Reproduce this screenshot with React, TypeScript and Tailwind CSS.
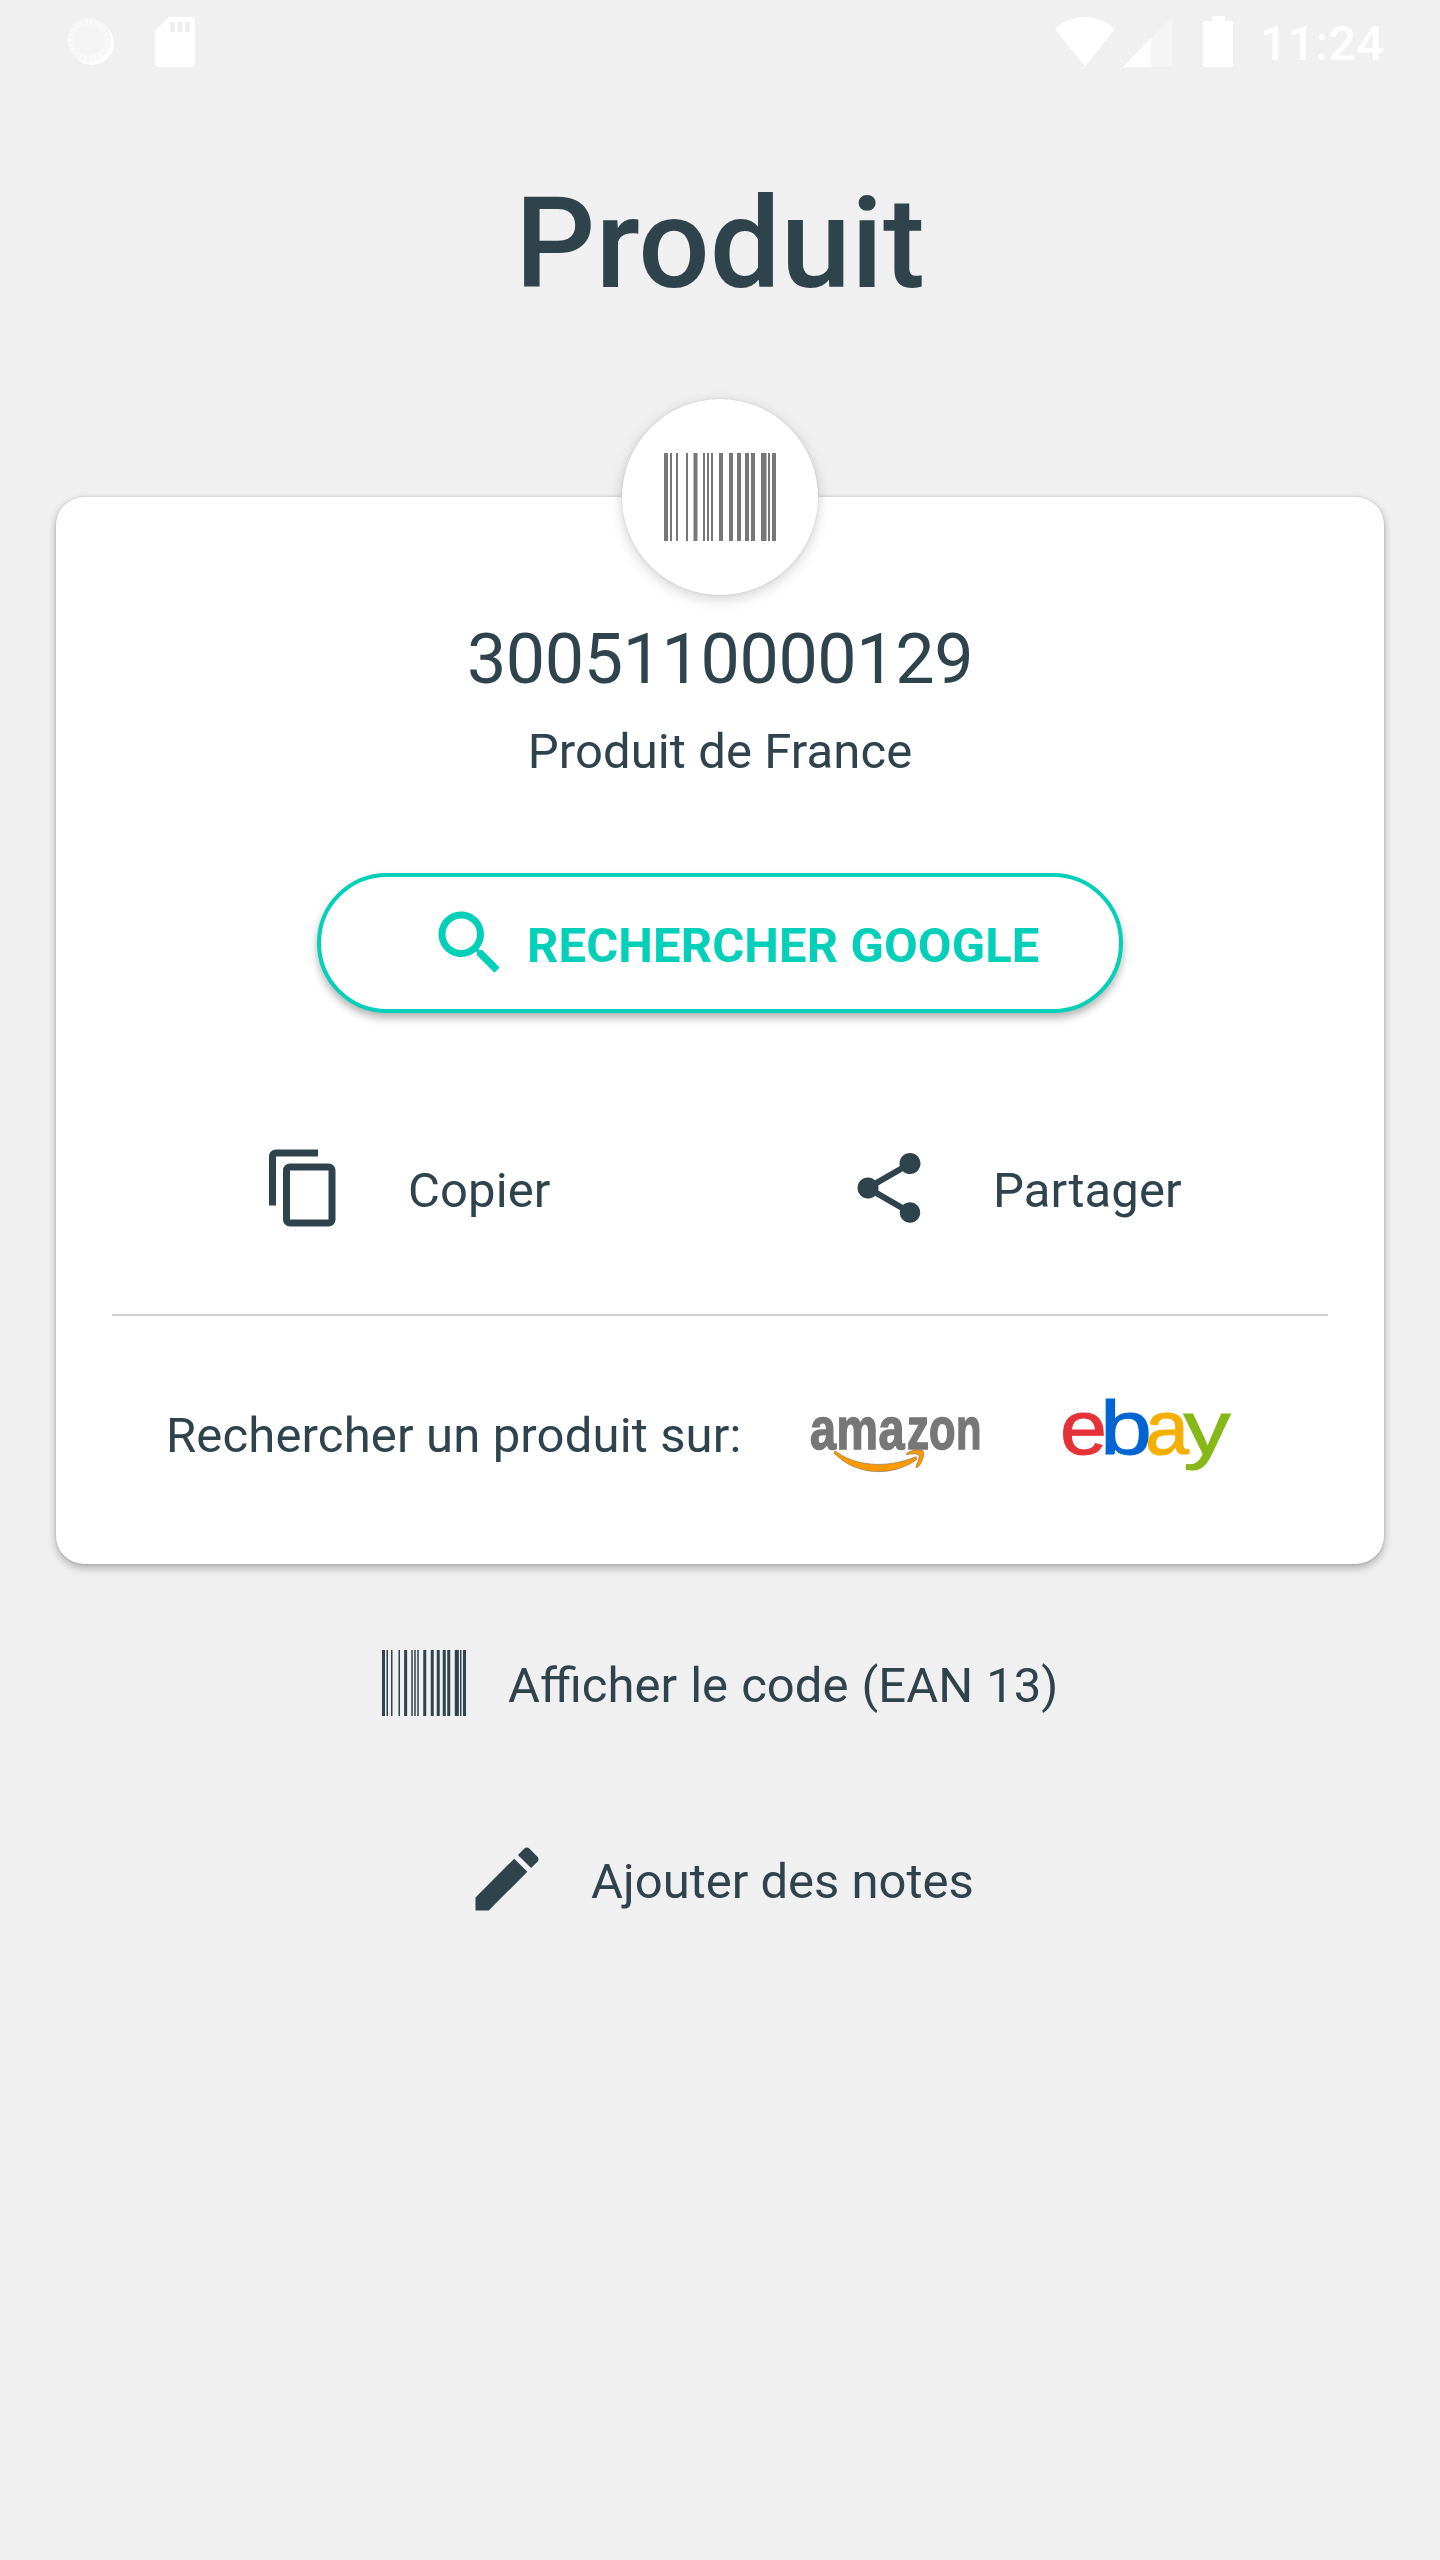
type IconProps = { path: string; className?: string };

// x position and width of every bar, on a 112 x 88 canvas
const bars = [
  [0, 4],
  [6, 2],
  [12, 2],
  [22, 2],
  [29.5, 4],
  [39, 2],
  [43, 2],
  [47, 2],
  [55, 4],
  [65, 4],
  [73, 4],
  [81, 4],
  [87, 4],
  [97, 5.5],
  [104, 2],
  [108, 4],
];

const icons = {
  search:
    "M15.5 14h-.79l-.28-.27C15.41 12.59 16 11.11 16 9.5 16 5.91 13.09 3 9.5 3S3 5.91 3 9.5 5.91 16 9.5 16c1.61 0 3.09-.59 4.23-1.57l.27.28v.79l5 4.99L20.49 19l-4.99-5zm-6 0C7.01 14 5 11.99 5 9.5S7.01 5 9.5 5 14 7.01 14 9.5 11.99 14 9.5 14z",
  copy: "M16 1H4c-1.1 0-2 .9-2 2v14h2V3h12V1zm3 4H8c-1.1 0-2 .9-2 2v14c0 1.1.9 2 2 2h11c1.1 0 2-.9 2-2V7c0-1.1-.9-2-2-2zm0 16H8V7h11v14z",
  share:
    "M18 16.08c-.76 0-1.44.3-1.96.77L8.91 12.7c.05-.23.09-.46.09-.7s-.04-.47-.09-.7l7.05-4.11c.54.5 1.25.81 2.04.81 1.66 0 3-1.34 3-3s-1.34-3-3-3-3 1.34-3 3c0 .24.04.47.09.7L8.04 9.81C7.5 9.31 6.79 9 6 9c-1.66 0-3 1.34-3 3s1.34 3 3 3c.79 0 1.5-.31 2.04-.81l7.12 4.16c-.05.21-.08.43-.08.65 0 1.61 1.31 2.92 2.92 2.92 1.61 0 2.92-1.31 2.92-2.92s-1.31-2.92-2.92-2.92z",
  edit: "M3 17.25V21h3.75L17.81 9.94l-3.75-3.75L3 17.25zM20.71 7.04c.39-.39.39-1.02 0-1.41l-2.34-2.34c-.39-.39-1.02-.39-1.41 0l-1.83 1.83 3.75 3.75 1.83-1.83z",
};

function Icon({ path, className = "" }: IconProps) {
  return (
    <svg viewBox="0 0 24 24" fill="currentColor" className={`h-[84px] w-[84px] shrink-0 ${className}`}>
      <path d={path} />
    </svg>
  );
}

function Barcode({ className }: { className: string }) {
  return (
    <svg viewBox="0 0 112 88" fill="currentColor" className={className}>
      {bars.map(([x, w]) => (
        <rect key={x} x={x} y={0} width={w} height={88} />
      ))}
    </svg>
  );
}

function StatusBar() {
  return (
    <header className="flex h-[84px] items-start justify-between pr-14 pl-[65px] text-white">
      <div className="flex pt-4">
        <svg viewBox="0 0 50 52" className="h-[52px] w-[50px]">
          <circle cx="27" cy="27" r="22" fill="#fff" />
          <circle cx="24" cy="24" r="22" fill="#f5f5f5" />
          <circle cx="24" cy="24" r="18" fill="none" stroke="#f9f9f9" strokeWidth="5" strokeDasharray="3 2" />
        </svg>
        <svg viewBox="0 0 40 52" className="ml-10 h-[52px] w-10">
          <path d="M14 1H36a4 4 0 0 1 4 4V47a4 4 0 0 1-4 4H4a4 4 0 0 1-4-4V15Z" fill="#fff" />
          <path d="M15 6h5v10h-5zM22.500 6h5v10h-5zM30 6h5v10h-5z" fill="#efefef" />
        </svg>
      </div>
      <div className="flex">
        <svg viewBox="0 0 60 52" className="mt-4 h-[52px] w-[60px]" fill="#fff">
          <path d="M0 13Q13 1 30 1T60 13L32 48Q30 51 28 48Z" />
        </svg>
        <svg viewBox="0 0 50 52" className="mt-4 ml-2 h-[52px] w-[50px]">
          <path d="M49 1V51H0Z" fill="#f5f5f5" />
          <path d="M28 22V51H0Z" fill="#fff" />
        </svg>
        <svg viewBox="0 0 30 52" className="mt-4 ml-[30px] h-[52px] w-[30px]" fill="#fff">
          <path d="M9 0H22V5H28Q30 5 30 7V49Q30 51 28 51H2Q0 51 0 49V7Q0 5 2 5H9Z" />
        </svg>
        <span className="ml-[27px] pt-[15px] text-[49px] leading-[58px] font-medium">11:24</span>
      </div>
    </header>
  );
}

function AmazonLogo() {
  return (
    <svg viewBox="0 -22 178 82" className="h-[82px] w-[178px] shrink-0">
      <g
        fill="#777"
        stroke="#777"
        strokeWidth="1.6"
        fontFamily="'Liberation Sans', Arial, sans-serif"
        fontWeight="700"
        fontSize="60"
        transform="translate(0 35.500)"
      >
        <text textLength="26" lengthAdjust="spacingAndGlyphs" x="0">a</text>
        <text textLength="41.500" lengthAdjust="spacingAndGlyphs" x="26.500">m</text>
        <text textLength="26" lengthAdjust="spacingAndGlyphs" x="68.500">a</text>
        <text textLength="22" lengthAdjust="spacingAndGlyphs" x="97">z</text>
        <text textLength="26.500" lengthAdjust="spacingAndGlyphs" x="119">o</text>
        <text textLength="25.500" lengthAdjust="spacingAndGlyphs" x="146">n</text>
      </g>
      <g fill="#f90" stroke="#8c7a55" strokeWidth="0.7">
        <path d="M25 38C45 53 76 56 105 44Q108 43.500 106 47C82 64 46 63 24 40Z" />
        <path d="M96 41C102 36 112 36 113.500 38.500C114 44 112 51 107 55Q105.500 55 106.500 52Q110.500 43 108.500 41.800Q105 40 97 41.500Z" />
      </g>
    </svg>
  );
}

function EbayLogo() {
  return (
    <svg viewBox="-5 -20 180 94" className="h-[94px] w-[180px] shrink-0">
      <g fontFamily="'Liberation Sans', Arial, sans-serif" fontSize="76" strokeWidth="1">
        <text x="-3" y="55.500" textLength="47" lengthAdjust="spacingAndGlyphs" fill="#e53238" stroke="#e53238">e</text>
        <text x="37" y="55.500" textLength="52" lengthAdjust="spacingAndGlyphs" fill="#0064d2" stroke="#0064d2">b</text>
        <text x="82" y="55.500" textLength="44" lengthAdjust="spacingAndGlyphs" fill="#f5af02" stroke="#f5af02">a</text>
        <text x="120.500" y="55.500" textLength="47" lengthAdjust="spacingAndGlyphs" fill="#86b817" stroke="#86b817">y</text>
      </g>
    </svg>
  );
}

export default function App() {
  return (
    <main className="min-h-[2560px] w-[1440px] bg-[#f0f0f0] font-[Roboto,sans-serif] text-[49px] leading-[58px] text-[#2f434d]">
      <StatusBar />

      <h1 className="mt-[76px] text-center text-[126px] leading-[168px] font-medium">Produit</h1>

      <section className="relative mx-14 mt-[169px] flex h-[1067px] flex-col items-center rounded-[28px] bg-white pt-[121px] shadow-[0_4px_9px_rgba(0,0,0,0.28),0_0_3px_rgba(0,0,0,0.15)]">
        <div className="absolute -top-[98px] left-[566px] flex h-[196px] w-[196px] items-center justify-center rounded-full bg-white shadow-[0_4px_14px_rgba(0,0,0,0.18),0_0_3px_rgba(0,0,0,0.1)]">
          <Barcode className="h-[88px] w-28 text-[#777]" />
        </div>

        <p className="text-[70px] leading-[82px] tracking-[-0.4px]">3005110000129</p>
        <p className="mt-[23px] tracking-[0.1px]">Produit de France</p>

        <button className="mt-[92px] flex h-[140px] w-[806px] shrink-0 items-center rounded-full border-4 border-[#04cfb8] bg-white pl-[107px] font-bold tracking-[0.1px] text-[#04cfb8] shadow-[0_5px_8px_rgba(0,0,0,0.3)]">
          <Icon path={icons.search} />
          <span className="ml-[15px] pt-[5px]">RECHERCHER GOOGLE</span>
        </button>

        <div className="mt-[132px] flex h-[85px] w-full shrink-0 items-center tracking-[0.1px]">
          <button className="ml-[206px] flex w-[585px] items-center">
            <Icon path={icons.copy} />
            <span className="ml-[62px] pt-[7px]">Copier</span>
          </button>
          <button className="flex items-center">
            <Icon path={icons.share} />
            <span className="ml-[62px] pt-[7px]">Partager</span>
          </button>
        </div>

        <hr className="mt-[84px] w-[1216px] border-t-2 border-[#cfcfcf]" />

        <div className="flex w-full items-start pt-[62px] pl-[110px]">
          <span className="w-[644px] pt-[29px] tracking-[0.15px]">Rechercher un produit sur:</span>
          <div className="pt-[13px]">
            <AmazonLogo />
          </div>
          <div className="ml-[70px]">
            <EbayLogo />
          </div>
        </div>
      </section>

      <button className="mt-[86px] ml-[382px] flex items-start">
        <Barcode className="h-[66px] w-[84px]" />
        <span className="ml-[42px] pt-[7px] [word-spacing:1px]">Afficher le code (EAN 13)</span>
      </button>

      <button className="mt-[121px] ml-[465px] flex items-center">
        <Icon path={icons.edit} />
        <span className="ml-[42px] pt-[5px]">Ajouter des notes</span>
      </button>
    </main>
  );
}
